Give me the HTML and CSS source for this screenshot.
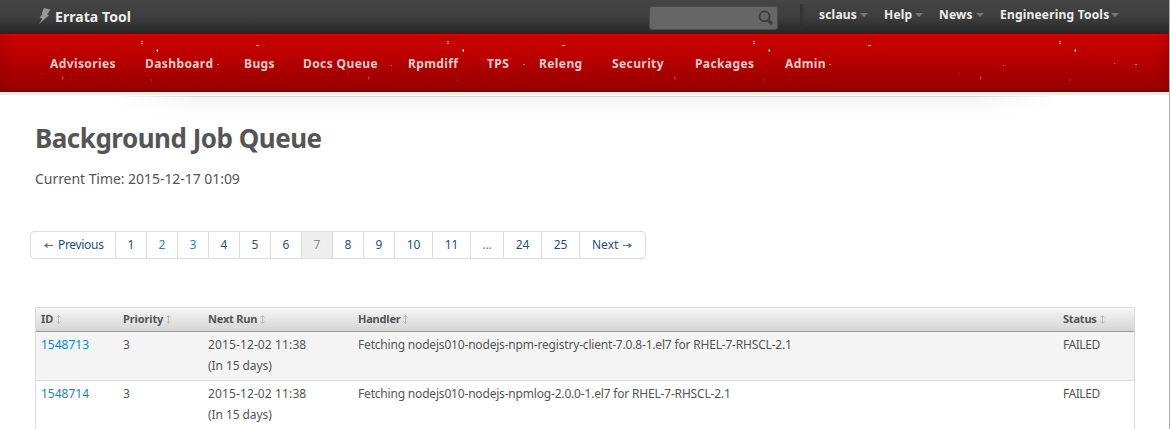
FILE: index.html
```
<!DOCTYPE html>
<html lang="en">
<head>
<meta charset="utf-8">
<title>Errata Tool</title>
<link rel="stylesheet" href="styles.css">
</head>
<body>
<div class="page">
  <header class="topbar">
    <div class="brand">
      <svg class="bolt" width="13" height="17" viewBox="0 0 13 17"><path d="M6 0 L12.5 1.8 L9 6.2 L11 7.2 L1 16 L4.4 10.4 L1.6 9.4 L4.6 6 L3.6 5.4 Z" fill="#999"/></svg>
      <span class="brand-name">Errata Tool</span>
    </div>
    <div class="search">
      <svg width="16" height="16" viewBox="0 0 16 16" fill="none" stroke="#3c3c3c"><circle cx="6.5" cy="6.3" r="5" stroke-width="1.8"/><path d="M10 10 L14 13.8" stroke-width="3"/></svg>
    </div>
    <nav class="usermenu">
      <a class="m1"><span>sclaus</span><i class="caret"></i></a>
      <a class="m2"><span>Help</span><i class="caret"></i></a>
      <a class="m3"><span>News</span><i class="caret"></i></a>
      <a class="m4"><span>Engineering Tools</span><i class="caret"></i></a>
    </nav>
  </header>
  <div class="navbar">
    <svg class="specks" width="1169" height="58" shape-rendering="crispEdges">
      <defs>
        <pattern id="stars" width="306" height="58" patternUnits="userSpaceOnUse">
          <path d="M141 7h2v1h-2zM141 9h2v1h-2zM256 11h3v1h-3z" fill="#fff0f0"/>
          <path d="M156 16h1v1h-1zM157 15h1v3h-1z" fill="#f5c4c4"/>
          <path d="M217 30h2v1h-2z" fill="#d98080"/>
          <path d="M85 31h1v1h-1zM196 29h1v1h-1z" fill="#d66060"/>
          <path d="M41 39h1v1h-1zM62 42h1v4h-1zM63 43h1v2h-1zM151 45h1v2h-1z" fill="#b52d2d"/>
        </pattern>
      </defs>
      <rect width="1169" height="58" fill="url(#stars)"/>
    </svg>
    <nav class="mainnav">
      <a>Advisories</a><a>Dashboard</a><a>Bugs</a><a>Docs Queue</a><a>Rpmdiff</a><a class="tps">TPS</a><a>Releng</a><a>Security</a><a>Packages</a><a>Admin</a>
    </nav>
  </div>
  <div class="strip"></div>
  <div class="shade"></div>
  <main class="content">
    <h1>Background Job Queue</h1>
    <p class="time">Current Time: 2015-12-17 01:09</p>
    <div class="pagination">
      <a class="prev"><svg class="arrow" width="9" height="7" viewBox="0 0 9 7"><path d="M0 3.5 L3.5 .8 V6.2 Z"/><path d="M3 3h6v1h-6z"/></svg><span>Previous</span></a><a>1</a><a class="seen">2</a><a class="seen">3</a><a>4</a><a>5</a><a>6</a><a class="current">7</a><a>8</a><a>9</a><a class="wide">10</a><a class="wide">11</a><a class="gap">...</a><a class="wide">24</a><a class="wide">25</a><a class="next"><span>Next</span><svg class="arrow" width="9" height="7" viewBox="0 0 9 7"><path d="M9 3.5 L5.5 .8 V6.2 Z"/><path d="M0 3h6v1h-6z"/></svg></a>
    </div>
    <table class="jobs">
      <colgroup><col class="c-id"><col class="c-priority"><col class="c-run"><col class="c-handler"><col class="c-status"></colgroup>
      <thead>
        <tr>
          <th>ID<svg class="sort" width="5" height="9" viewBox="0 0 5 9"><path d="M2.5 1v7M.5 2.5 2.5.5l2 2M.5 6.5l2 2 2-2"/></svg></th>
          <th class="h-priority">Priority<svg class="sort" width="5" height="9" viewBox="0 0 5 9"><path d="M2.5 1v7M.5 2.5 2.5.5l2 2M.5 6.5l2 2 2-2"/></svg></th>
          <th class="h-run">Next Run<svg class="sort" width="5" height="9" viewBox="0 0 5 9"><path d="M2.5 1v7M.5 2.5 2.5.5l2 2M.5 6.5l2 2 2-2"/></svg></th>
          <th class="h-handler">Handler<svg class="sort" width="5" height="9" viewBox="0 0 5 9"><path d="M2.5 1v7M.5 2.5 2.5.5l2 2M.5 6.5l2 2 2-2"/></svg></th>
          <th class="h-status">Status<svg class="sort" width="5" height="9" viewBox="0 0 5 9"><path d="M2.5 1v7M.5 2.5 2.5.5l2 2M.5 6.5l2 2 2-2"/></svg></th>
        </tr>
      </thead>
      <tbody>
        <tr class="odd"><td class="id">1548713</td><td>3</td><td class="run">2015-12-02 11:38<br><span class="ago">(In 15 days)</span></td><td class="handler">Fetching nodejs010-nodejs-npm-registry-client-7.0.8-1.el7 for RHEL-7-RHSCL-2.1</td><td class="status">FAILED</td></tr>
        <tr><td class="id">1548714</td><td>3</td><td class="run">2015-12-02 11:38<br><span class="ago">(In 15 days)</span></td><td class="handler">Fetching nodejs010-nodejs-npmlog-2.0.0-1.el7 for RHEL-7-RHSCL-2.1</td><td class="status">FAILED</td></tr>
      </tbody>
    </table>
  </main>
</div>
</body>
</html>
```
FILE: styles.css
```
* { box-sizing: border-box; }
body { margin: 0; overflow: hidden; font-family: "Noto Sans", "Open Sans", sans-serif; font-size: 12px; color: #555; background: #fff; }
.page { width: 1170px; height: 429px; overflow: hidden; border-right: 1px solid #aaa; }

.topbar { display: flex; height: 34px; margin-right: -1px; background: linear-gradient(#454545, #3e3e3e 50%, #262626); color: #eee; font-weight: bold; }
.brand { display: flex; width: 649px; padding: 8px 0 0 38px; }
.brand-name { margin-left: 4px; font-size: 14px; line-height: 18px; letter-spacing: .06px; }
.search { width: 129px; height: 24px; margin-top: 6px; padding: 3px 0 0 108px; border: 1px solid #4b4b4b; border-radius: 3px; background: #666; }
.search svg { display: block; }
.usermenu { display: flex; width: 370px; height: 24px; margin: 4px 0 0 22px; padding-left: 19px; background: linear-gradient(90deg, #303030, transparent 6px); line-height: 22px; letter-spacing: .2px; }
.usermenu a { display: flex; justify-content: space-between; white-space: nowrap; }
.m1 { width: 49px; margin-right: 16px; }
.m2 { width: 39px; margin-right: 16px; }
.m3 { width: 45px; margin-right: 16px; }
.m4 { width: 119px; }
.caret { width: 8px; height: 4px; margin-top: 9px; background: #777; clip-path: polygon(0 0, 100% 0, 50% 100%); }

.navbar { position: relative; height: 58px; background: linear-gradient(90deg, rgba(130,0,0,.25), transparent 14px, transparent 1154px, rgba(130,0,0,.25)), linear-gradient(#e00000 0, #e00000 1px, #c60000 2px, #c20000 15px, #ad0000 34px, #9a0000 54px, #790000); }
.specks { position: absolute; left: 0; top: 0; }
.mainnav { position: relative; display: grid; grid-template-columns: 95px 99px 59px 105px 79px 52px 73px 83px 90px 60px; padding: 20px 0 0 50px; color: #f1cccc; font-weight: bold; line-height: 20px; letter-spacing: .4px; white-space: nowrap; }
.strip { height: 3px; background: #ecebec; }
.shade { width: 940px; height: 20px; margin: 1px 0 0 115px; background: linear-gradient(90deg, #fff, transparent 80px, transparent 860px, #fff), linear-gradient(#d6d6d6 0, #d6d6d6 1px, #f5f5f5 1px, #fff 20px); }

.content { padding: 7px 34px 0 35px; }
h1 { margin: 0; font-size: 26px; line-height: 30px; letter-spacing: -.5px; }
.time { margin: 16px 0 0; font-size: 14px; line-height: 20px; letter-spacing: -.05px; }
.pagination { display: flex; width: 616px; height: 28px; margin: 42px 0 0 -5px; overflow: hidden; border: 1px solid #ddd; border-radius: 4px; color: #1f4e79; line-height: 26px; }
.pagination a { flex: none; width: 31px; text-align: center; border-right: 1px solid #ddd; }
.pagination .seen { color: #337fbc; }
.pagination .current { background: #eee; color: #888; }
.pagination .prev { display: flex; align-items: center; width: 85px; padding-left: 13px; letter-spacing: -.32px; }
.prev .arrow { margin-right: 5px; }
.pagination .wide { width: 38px; }
.pagination .gap { width: 33px; color: #777; }
.pagination .next { display: flex; align-items: center; width: 65px; padding-left: 12px; border-right: 0; }
.next .arrow { margin-left: 5px; }
.arrow { flex: none; fill: #567896; margin-top: 1px; }

.jobs { width: 1100px; margin-top: 48px; table-layout: fixed; border-collapse: separate; border-spacing: 0; border: 1px solid #ddd; border-bottom: 0; }
.c-id { width: 82px; }
.c-priority { width: 85px; }
.c-run { width: 150px; }
.c-handler { width: 705px; }
th { height: 24px; padding: 0 0 2px 5px; border-bottom: 1px solid #999; background: linear-gradient(#f6f6f6, #d5d5d5); font-size: 11px; line-height: 20px; text-align: left; white-space: nowrap; }
.h-priority { letter-spacing: -.12px; }
.h-run, .h-handler, .h-status { letter-spacing: -.2px; }
.sort { margin: 0 0 -1px 3px; fill: none; stroke: #bbb; }
td { height: 49px; padding: 2px 0 3px 5px; border-bottom: 1px solid #ddd; line-height: 21px; vertical-align: top; white-space: nowrap; }
.odd td { background: #f4f4f4; }
.id { color: #0e87c9; }
.run { letter-spacing: .12px; }
.ago { letter-spacing: -.08px; }
.handler { letter-spacing: -.185px; }
.status { letter-spacing: -.45px; }
```
